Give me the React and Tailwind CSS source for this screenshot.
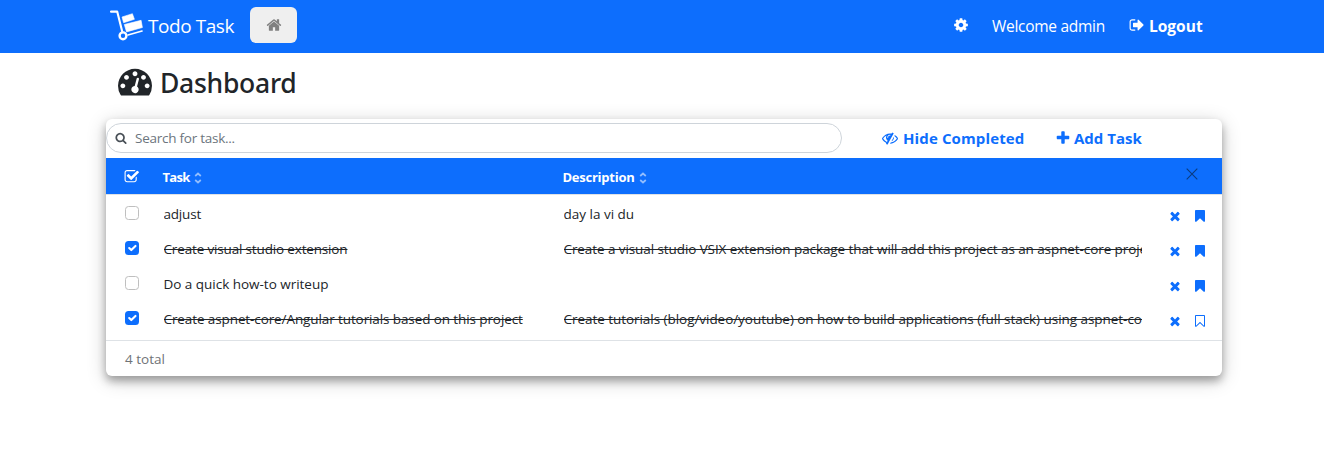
const paths = {
  home: 'M1472 992v480q0 26-19 45t-45 19h-384v-384h-256v384h-384q-26 0-45-19t-19-45v-480q0-1 .5-3t.5-3l575-474 575 474q1 2 1 6zm223-69l-62 74q-8 9-21 11h-3q-13 0-21-7l-692-577-692 577q-12 8-24 7-13-2-21-11l-62-74q-8-10-7-23.5t11-21.5l719-599q32-26 76-26t76 26l244 204v-195q0-14 9-23t23-9h192q14 0 23 9t9 23v408l219 182q10 8 11 21.5t-7 23.5z',
  cog: 'M1152 896q0-106-75-181t-181-75-181 75-75 181 75 181 181 75 181-75 75-181zm512-109v222q0 12-8 23t-20 13l-185 28q-19 54-39 91 35 50 107 138 10 12 10 25t-9 23q-27 37-99 108t-94 71q-12 0-26-9l-138-108q-44 23-91 38-16 136-29 186-7 28-36 28h-222q-14 0-24.5-8.5t-11.5-21.5l-28-184q-49-16-90-37l-141 107q-10 9-25 9-14 0-25-11-126-114-165-168-7-10-7-23 0-12 8-23 15-21 51-66.5t54-70.5q-27-50-41-99l-183-27q-13-2-21-12.5t-8-23.5v-222q0-12 8-23t19-13l186-28q14-46 39-92-40-57-107-138-10-12-10-24 0-10 9-23 26-36 98.5-107.5t94.5-71.5q13 0 26 10l138 107q44-23 91-38 16-136 29-186 7-28 36-28h222q14 0 24.5 8.5t11.5 21.5l28 184q49 16 90 37l142-107q9-9 24-9 13 0 25 10 129 119 165 170 7 8 7 22 0 12-8 23-15 21-51 66.5t-54 70.5q26 50 41 98l183 28q13 2 21 12.5t8 23.5z',
  signOut:
    'M704 1440q0 4 1 20t.5 26.5-3 23.5-10 19.5-20.5 6.5h-320q-119 0-203.5-84.5t-84.5-203.5v-704q0-119 84.5-203.5t203.5-84.5h320q13 0 22.5 9.5t9.5 22.5q0 4 1 20t.5 26.5-3 23.5-10 19.5-20.5 6.5h-320q-66 0-113 47t-47 113v704q0 66 47 113t113 47h312l11.5 1 11.5 3 8 5.5 7 9 2 13.5zm928-544q0 26-19 45l-544 544q-19 19-45 19t-45-19-19-45v-288h-448q-26 0-45-19t-19-45v-384q0-26 19-45t45-19h448v-288q0-26 19-45t45-19 45 19l544 544q19 19 19 45z',
  tachometer:
    'M384 1152q0-53-37.5-90.5t-90.5-37.5-90.5 37.5-37.5 90.5 37.5 90.5 90.5 37.5 90.5-37.5 37.5-90.5zm192-448q0-53-37.5-90.5t-90.5-37.5-90.5 37.5-37.5 90.5 37.5 90.5 90.5 37.5 90.5-37.5 37.5-90.5zm428 481l101-382q6-26-7.5-48.5t-38.5-29.5-48 6.5-30 39.5l-101 382q-60 5-107 43.5t-63 98.5q-20 77 20 146t117 89 146-20 89-117q16-60-6-117t-72-91zm660-33q0-53-37.5-90.5t-90.5-37.5-90.5 37.5-37.5 90.5 37.5 90.5 90.5 37.5 90.5-37.5 37.5-90.5zm-640-640q0-53-37.5-90.5t-90.5-37.5-90.5 37.5-37.5 90.5 37.5 90.5 90.5 37.5 90.5-37.5 37.5-90.5zm448 192q0-53-37.5-90.5t-90.5-37.5-90.5 37.5-37.5 90.5 37.5 90.5 90.5 37.5 90.5-37.5 37.5-90.5zm320 448q0 261-141 483-19 29-54 29h-1402q-35 0-54-29-141-221-141-483 0-182 71-348t191-286 286-191 348-71 348 71 286 191 191 286 71 348z',
  search:
    'M1216 832q0-185-131.5-316.5t-316.5-131.5-316.5 131.5-131.5 316.5 131.5 316.5 316.5 131.5 316.5-131.5 131.5-316.5zm512 832q0 52-38 90t-90 38q-54 0-90-38l-343-342q-179 124-399 124-143 0-273.5-55.5t-225-150-150-225-55.5-273.5 55.5-273.5 150-225 225-150 273.5-55.5 273.5 55.5 225 150 150 225 55.5 273.5q0 220-124 399l343 343q37 37 37 90z',
  plus: 'M1600 736v192q0 40-28 68t-68 28h-416v416q0 40-28 68t-68 28h-192q-40 0-68-28t-28-68v-416h-416q-40 0-68-28t-28-68v-192q0-40 28-68t68-28h416v-416q0-40 28-68t68-28h192q40 0 68 28t28 68v416h416q40 0 68 28t28 68z',
  times:
    'M1490 1322q0 40-28 68l-136 136q-28 28-68 28t-68-28l-294-294-294 294q-28 28-68 28t-68-28l-136-136q-28-28-28-68t28-68l294-294-294-294q-28-28-28-68t28-68l136-136q28-28 68-28t68 28l294 294 294-294q28-28 68-28t68 28l136 136q28 28 28 68t-28 68l-294 294 294 294q28 28 28 68z',
  bookmark:
    'M1420 128q23 0 44 9 33 13 52.5 41t19.5 62v1289q0 34-19.5 62t-52.5 41q-19 8-44 8-48 0-83-32l-441-424-441 424q-36 33-83 33-23 0-44-9-33-13-52.5-41t-19.5-62v-1289q0-34 19.5-62t52.5-41q21-9 44-9h1048z',
  bookmarkOutline:
    'M1408 256h-1024v1242l423-406 89-85 89 85 423 406v-1242zm12-128q23 0 44 9 33 13 52.5 41t19.5 62v1289q0 34-19.5 62t-52.5 41q-19 8-44 8-48 0-83-32l-441-424-441 424q-36 33-83 33-23 0-44-9-33-13-52.5-41t-19.5-62v-1289q0-34 19.5-62t52.5-41q21-9 44-9h1048z',
  checkSquare:
    'M1472 930v318q0 119-84.5 203.5t-203.5 84.5h-832q-119 0-203.5-84.5t-84.5-203.5v-832q0-119 84.5-203.5t203.5-84.5h832q63 0 117 25 15 7 18 23 3 17-9 29l-49 49q-10 10-23 10-3 0-9-2-23-6-45-6h-832q-66 0-113 47t-47 113v832q0 66 47 113t113 47h832q66 0 113-47t47-113v-254q0-13 9-22l64-64q10-10 23-10 6 0 12 3 20 8 20 29zm231-489l-814 814q-24 24-57 24t-57-24l-430-430q-24-24-24-57t24-57l110-110q24-24 57-24t57 24l263 263 647-647q24-24 57-24t57 24l110 110q24 24 24 57t-24 57z',
  eyeSlash:
    'M555 1335l78-141q-87-63-136-159t-49-203q0-121 61-225-229 117-381 353 167 258 427 375zm389-759q0-20-14-34t-34-14q-125 0-214.5 89.5t-89.5 214.5q0 20 14 34t34 14 34-14 14-34q0-86 61-147t147-61q20 0 34-14t14-34zm363-191q0 7-1 9-105 188-315 566t-316 567l-49 89q-10 16-28 16-12 0-134-70-16-10-16-28 0-12 44-87-143-65-263.5-173t-208.5-245q-20-31-20-69t20-69q153-235 380-371t496-136q89 0 180 17l54-97q10-16 28-16 5 0 18 6t31 15.5 33 18.5 31.5 18.5 19.5 11.5q16 10 16 27zm37 447q0 139-79 253.5t-209 164.5l280-502q8 45 8 84zm448 128q0 35-20 69-39 64-109 145-150 172-347.5 267t-419.5 95l74-132q212-18 392.5-137t301.5-307q-115-179-282-294l63-112q95 64 182.5 153t144.5 184q20 34 20 69z',
};

function Icon({ name, className }) {
  return (
    <svg viewBox="0 0 1792 1792" fill="currentColor" className={`shrink-0 ${className}`}>
      <path d={paths[name]} />
    </svg>
  );
}

function Logo() {
  return (
    <svg viewBox="0 0 34 32" className="-mt-0.5 h-8 w-[34px] shrink-0" fill="none" stroke="white">
      <path d="M1 1.6h6.2l5.2 20.6" strokeWidth="2.1" strokeLinecap="round" strokeLinejoin="round" />
      <circle cx="13" cy="25.8" r="3.4" strokeWidth="2.4" />
      <path d="M18 25l14-4" strokeWidth="1.7" strokeLinecap="round" />
      <path
        d="M12 7l10.4-3.3 2 5.6-10.8 3.4z M14.3 14.5l16.8-4.2 1.3 7.2-15.9 4.4z"
        fill="white"
        strokeWidth="0.6"
        strokeLinejoin="round"
      />
    </svg>
  );
}

function Sort() {
  return (
    <svg viewBox="0 0 8 12" className="ml-1 h-3 w-2 shrink-0 opacity-55" fill="none" stroke="white" strokeWidth="1.7">
      <path d="M1.2 4l2.8-2.5 2.8 2.5M1.2 8l2.8 2.5 2.8-2.5" />
    </svg>
  );
}

function Checkbox({ checked }) {
  return checked ? (
    <span className="flex size-3.5 rounded-[3.5px] bg-[#0d6efd]">
      <svg viewBox="0 0 20 20" className="size-3.5" fill="none" stroke="white" strokeWidth="3" strokeLinecap="round" strokeLinejoin="round">
        <path d="M6 10l3 3 6-6" />
      </svg>
    </span>
  ) : (
    <span className="block size-3.5 rounded-[3.5px] border border-[#bfbfbf] bg-white" />
  );
}

const rows = [
  { task: 'adjust', taskClass: 'tracking-[-0.2px]', desc: 'day la vi du', descClass: 'tracking-normal', done: false, marked: true },
  {
    task: 'Create visual studio extension',
    taskClass: 'tracking-[-0.157px]',
    desc: 'Create a visual studio VSIX extension package that will add this project as an aspnet-core project template',
    descClass: 'tracking-[-0.085px]',
    done: true,
    marked: true,
  },
  { task: 'Do a quick how-to writeup', taskClass: 'tracking-[-0.02px]', desc: '', descClass: '', done: false, marked: true },
  {
    task: 'Create aspnet-core/Angular tutorials based on this project',
    taskClass: 'tracking-[-0.1px]',
    desc: 'Create tutorials (blog/video/youtube) on how to build applications (full stack) using aspnet-core and Angular',
    descClass: 'tracking-[-0.045px]',
    done: true,
    marked: false,
  },
];

function TaskRow({ row }) {
  const strike = row.done ? 'line-through decoration-1' : '';
  return (
    <div className="flex h-[35px] items-center pl-[19px] text-[13.5px] leading-5 text-[#212529]">
      <div className="-mt-[3px] w-[38.5px] shrink-0">
        <Checkbox checked={row.done} />
      </div>
      <div className="-mt-0.5 w-[400px] shrink-0 overflow-hidden whitespace-nowrap">
        <span className={`${strike} ${row.taskClass}`}>{row.task}</span>
      </div>
      <div className="-mt-0.5 w-[578.5px] shrink-0 overflow-hidden whitespace-nowrap">
        <span className={`${strike} ${row.descClass}`}>{row.desc}</span>
      </div>
      <div className="flex items-center gap-[11.5px] pt-0.5 pl-[25.5px] text-[#0d6efd]">
        <Icon name="times" className="size-3.5" />
        <Icon name={row.marked ? 'bookmark' : 'bookmarkOutline'} className="size-3.5" />
      </div>
    </div>
  );
}

export default function App() {
  return (
    <div className="h-[463px] overflow-hidden bg-white font-['Open_Sans','Noto_Sans',sans-serif] text-[#212529]">
      <nav className="flex h-[53px] items-center justify-between bg-[#0d6efd] pr-[121px] pl-[110px] text-white">
        <div className="flex items-center">
          <Logo />
          <span className="ml-1 w-[102px] text-[19px] tracking-[-0.44px] whitespace-nowrap">Todo Task</span>
          <button className="-mt-[3px] flex h-9 w-[47px] items-center justify-center rounded-md bg-[#efefef] text-[#808080]">
            <Icon name="home" className="size-4" />
          </button>
        </div>
        <div className="flex items-center text-[15.5px] whitespace-nowrap">
          <Icon name="cog" className="-mt-[3px] size-4" />
          <span className="ml-[23px] w-[137px] tracking-[-0.28px]">Welcome admin</span>
          <Icon name="signOut" className="-mt-[3px] size-4" />
          <span className="ml-1 w-[54px] font-bold">Logout</span>
        </div>
      </nav>

      <h1 className="flex h-[66px] items-center pb-[5px] pl-[118px] font-['Noto_Sans',sans-serif] text-[26.5px] font-medium tracking-[-0.27px]">
        <Icon name="tachometer" className="-mt-[5px] mr-2 size-[34px]" />
        Dashboard
      </h1>

      <main className="ml-[106px] h-[257px] w-[1116px] overflow-hidden rounded-md bg-white shadow-[0_5px_8px_rgba(0,0,0,0.3),0_4px_20px_rgba(0,0,0,0.2)]">
        <div className="flex h-[39px] items-center whitespace-nowrap">
          <div className="-mt-px flex h-[30px] w-[736px] items-center rounded-full border border-[#ced4da] pl-2 text-[13.5px] tracking-[-0.25px] text-[#6c757d]">
            <Icon name="search" className="mr-2 size-3 text-[#495057]" />
            Search for task...
          </div>
          <div className="ml-10 flex items-center text-[15px] font-bold text-[#0d6efd]">
            <Icon name="eyeSlash" className="-mt-px mr-[5px] size-4" />
            <span className="w-[152px] tracking-[0.12px]">Hide Completed</span>
            <Icon name="plus" className="-mt-px mr-[3px] size-4" />
            <span>Add Task</span>
          </div>
        </div>

        <div className="flex h-[37px] items-center border-b border-[#dee2e6] bg-[#0d6efd] pl-[17.5px] text-[13px] font-bold text-white">
          <Icon name="checkSquare" className="mt-px mr-[23.5px] size-[15.5px]" />
          <div className="mt-[3px] flex w-[400px] items-center">
            <span className="tracking-[-0.7px]">Task</span>
            <Sort />
          </div>
          <div className="mt-[3px] flex w-[623.5px] items-center">
            <span className="tracking-[-0.25px]">Description</span>
            <Sort />
          </div>
          <svg viewBox="0 0 12 12" className="-mt-1 size-3" stroke="#0b3b7f" strokeWidth="1.1">
            <path d="M.7.7l10.6 10.6M11.3.7L.7 11.3" />
          </svg>
        </div>

        <div className="h-[146px] border-b border-[#dee2e6] pt-0.5">
          {rows.map((row) => (
            <TaskRow key={row.task} row={row} />
          ))}
        </div>

        <div className="flex h-[35px] items-center pt-0.5 pl-[19px] text-[13.5px] text-[#6f7377]">4 total</div>
      </main>
    </div>
  );
}
